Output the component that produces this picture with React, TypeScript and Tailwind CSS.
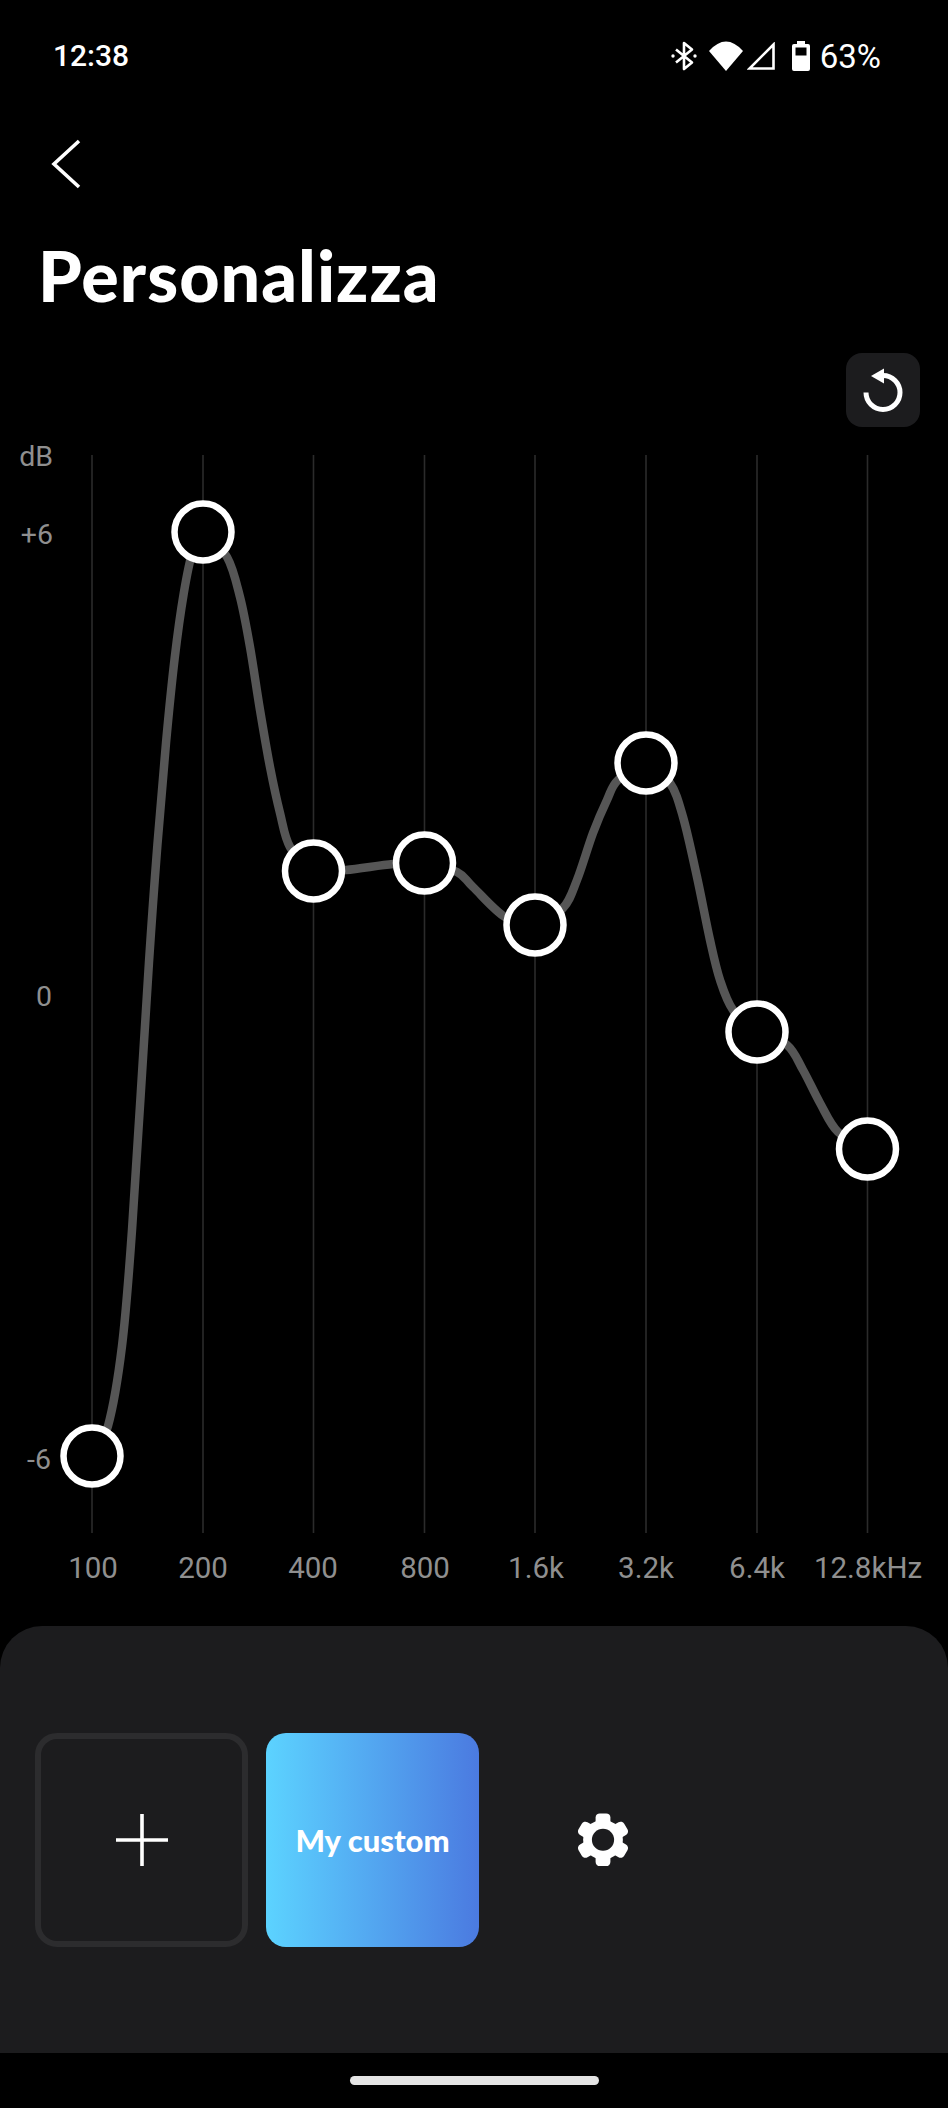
const BANDS = [
  { label: '100', x: 92, y: 1456, labelX: 93 },
  { label: '200', x: 203, y: 532, labelX: 203 },
  { label: '400', x: 313.5, y: 871, labelX: 313 },
  { label: '800', x: 424.5, y: 863, labelX: 425 },
  { label: '1.6k', x: 535, y: 925, labelX: 536 },
  { label: '3.2k', x: 646, y: 763, labelX: 646 },
  { label: '6.4k', x: 757, y: 1032, labelX: 757 },
  { label: '12.8kHz', x: 867.5, y: 1149, labelX: 868 },
];

// curve traced through the reference, smoothed below
const CURVE: [number, number][] = [
  [92, 1456], [108, 1426], [122, 1346], [132, 1230], [149, 962], [157.4, 845], [166, 743], [174.7, 658], [183.8, 593], [193, 550],
  [203, 532], [227, 557], [240, 597], [250, 647], [260, 710], [270, 767], [280, 813], [290, 847],
  [313.5, 871], [346, 870], [393, 864], [424.5, 863], [457, 872], [473, 887], [505, 917],
  [535, 925], [563, 908], [577, 880], [593, 833], [607, 800], [618, 780],
  [646, 763], [670, 783], [683, 817], [697, 877], [710, 940], [720, 980], [733, 1010],
  [757, 1032], [787, 1045], [803, 1070], [820, 1103], [838, 1132], [867.5, 1149],
];

function smoothPath(pts: [number, number][]) {
  let d = `M${pts[0][0]} ${pts[0][1]}`;
  for (let i = 0; i < pts.length - 1; i++) {
    const p0 = pts[Math.max(i - 1, 0)];
    const p1 = pts[i];
    const p2 = pts[i + 1];
    const p3 = pts[Math.min(i + 2, pts.length - 1)];
    const c1x = p1[0] + (p2[0] - p0[0]) / 6;
    const c1y = p1[1] + (p2[1] - p0[1]) / 6;
    const c2x = p2[0] - (p3[0] - p1[0]) / 6;
    const c2y = p2[1] - (p3[1] - p1[1]) / 6;
    d += ` C${c1x} ${c1y} ${c2x} ${c2y} ${p2[0]} ${p2[1]}`;
  }
  return d;
}

function StatusBar() {
  return (
    <div className="flex h-[112px] items-center justify-between pl-[53px] pr-[67px] font-['Roboto',sans-serif] text-white">
      <span className="text-[30px] font-medium leading-none">12:38</span>
      <div className="flex items-center">
        <svg width="26" height="30" viewBox="0 0 26 30" fill="none" stroke="white" strokeWidth="2.6" className="mr-[12px]">
          <path d="M5 8.5 L21 21.5 L13 28 V2 L21 8.5 L5 21.5" strokeLinejoin="round" />
          <circle cx="2" cy="15" r="1.7" fill="white" stroke="none" />
          <circle cx="24" cy="15" r="1.7" fill="white" stroke="none" />
        </svg>
        <svg width="34" height="30" viewBox="0 0 34 30" className="mr-[4px]">
          <path d="M0 10 Q17 -9 34 10 L17 30 Z" fill="white" />
        </svg>
        <svg width="28" height="28" viewBox="0 0 28 28" fill="none" stroke="white" strokeWidth="2.6" className="mr-[17px]">
          <path d="M2.5 26.5 H26.5 V2.5 Z" />
        </svg>
        <svg width="18" height="30" viewBox="0 0 18 30" className="mr-[10px]">
          <path d="M5 0 H13 V3 H16 Q18 3 18 5 V28 Q18 30 16 30 H2 Q0 30 0 28 V5 Q0 3 2 3 H5 Z" fill="white" />
          <rect x="3.5" y="6.5" width="11" height="8" fill="black" />
        </svg>
        <span className="text-[33px] leading-none">63%</span>
      </div>
    </div>
  );
}

function Chart() {
  return (
    <svg width="948" height="1176" viewBox="0 440 948 1176" className="block shrink-0" fontFamily="Roboto, sans-serif">
      {BANDS.map((b) => (
        <line key={b.label} x1={b.x} x2={b.x} y1="455" y2="1533" stroke="#2b2b2b" strokeWidth="1.6" />
      ))}

      <path d={smoothPath(CURVE)} fill="none" stroke="#565656" strokeWidth="8.5" strokeLinecap="round" />

      {BANDS.map((b) => (
        <circle key={b.label} cx={b.x} cy={b.y} r="28.5" fill="black" stroke="white" strokeWidth="6.5" />
      ))}

      <g fill="#8f8f8f" fontSize="28.5" textAnchor="end">
        <text x="53" y="466">dB</text>
        <text x="53" y="544">+6</text>
        <text x="52" y="1006">0</text>
        <text x="51" y="1469">-6</text>
      </g>
      <g fill="#8f8f8f" fontSize="29.5" textAnchor="middle">
        {BANDS.map((b) => (
          <text key={b.label} x={b.labelX} y="1578">
            {b.label}
          </text>
        ))}
      </g>
    </svg>
  );
}

function GearIcon() {
  return (
    <svg width="50" height="55.5" viewBox="-27 -30 54 60">
      <circle r="21.5" fill="white" />
      {[0, 60, 120, 180, 240, 300].map((deg) => (
        <rect key={deg} x="-8" y="-28.5" width="16" height="20" rx="4.5" fill="white" transform={`rotate(${deg})`} />
      ))}
      <circle r="12" fill="#1c1c1e" />
    </svg>
  );
}

export default function App() {
  return (
    <div className="flex h-[2108px] w-[948px] flex-col overflow-hidden bg-black">
      <StatusBar />

      <button className="ml-[50px] mt-[26px] block w-fit" aria-label="Indietro">
        <svg width="32" height="52" viewBox="0 0 32 52" fill="none" stroke="white" strokeWidth="3.6">
          <path d="M29 3 L4 26 L29 49" />
        </svg>
      </button>

      <h1 className="ml-[38px] mt-[43px] h-[84px] font-['Lato',sans-serif] text-[70px] font-black leading-[84px] tracking-[1px] text-white">
        Personalizza
      </h1>

      <div className="mt-[36px] flex justify-end pr-[28px]">
        <button className="flex h-[74px] w-[74px] items-center justify-center rounded-[16px] bg-[#1c1c1e]" aria-label="Ripristina">
          <svg width="74" height="74" viewBox="0 0 74 74" fill="none">
            <path d="M20 39.5 A17 17 0 1 0 37 22.5" stroke="white" strokeWidth="5" />
            <path d="M25 23 L38 15.5 V30.5 Z" fill="white" />
          </svg>
        </button>
      </div>

      <div className="mt-[13px]">
        <Chart />
      </div>

      <div className="mt-[10px] flex h-[427px] shrink-0 items-start gap-[18px] rounded-t-[42px] bg-[#1c1c1e] pl-[35px] pt-[107px]">
        <button
          className="flex h-[214px] w-[213px] items-center justify-center rounded-[22px] border-[6.5px] border-[#2c2c2e]"
          aria-label="Aggiungi"
        >
          <svg width="52" height="52" viewBox="0 0 52 52" stroke="white" strokeWidth="3.6">
            <path d="M0 26 H52 M26 0 V52" />
          </svg>
        </button>
        <div className="flex h-[214px] w-[213px] items-center justify-center rounded-[20px] bg-linear-to-r from-[#5cd3ff] to-[#4b7ae0] font-['Lato',sans-serif] text-[31px] font-black text-white">
          My custom
        </div>
        <div className="ml-[81px] flex h-[214px] items-center">
          <GearIcon />
        </div>
      </div>

      <div className="flex flex-1 items-center justify-center bg-black">
        <div className="h-[9px] w-[249px] rounded-full bg-[#e4e4e4]" />
      </div>
    </div>
  );
}
